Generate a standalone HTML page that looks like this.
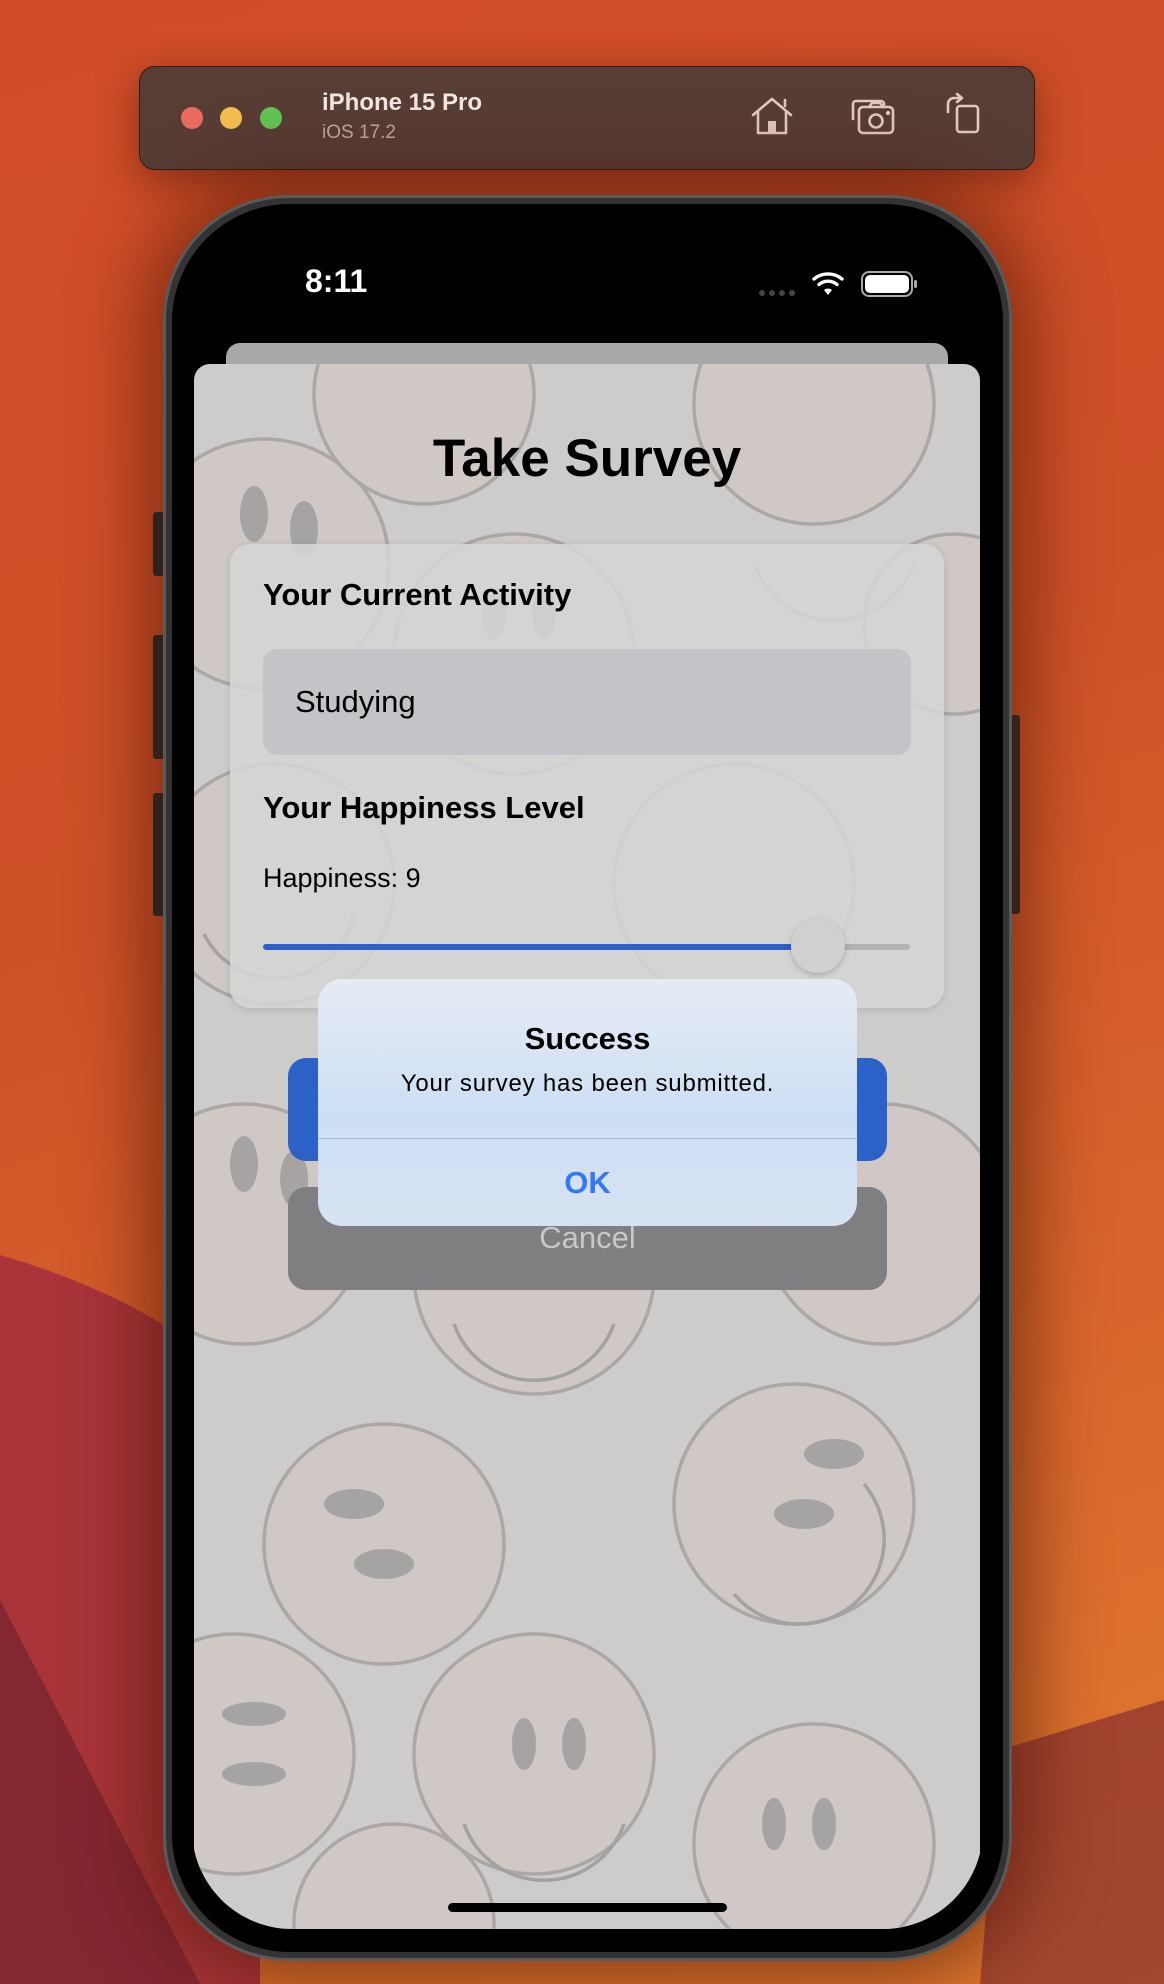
<!DOCTYPE html>
<html><head><meta charset="utf-8"><style>
*{margin:0;padding:0;box-sizing:border-box}
body{width:1164px;height:1984px;overflow:hidden;position:relative;font-family:"Liberation Sans",sans-serif;
background:linear-gradient(160deg,#d14d28 0%,#cf5128 40%,#d8652c 70%,#e07a30 100%)}
.abs{position:absolute}
</style></head><body>
<svg class="abs" style="left:0;top:0" width="1164" height="1984">
<path d="M0 1255 C120 1290 200 1340 260 1400 L260 1984 L0 1984Z" fill="#a8343a"/>
<path d="M0 1600 L0 1984 L200 1984 Z" fill="#6a1f2c" opacity="0.6"/>
<path d="M1000 1750 L1164 1700 L1164 1984 L980 1984Z" fill="#7a2530" opacity="0.6"/>
</svg>

<!-- toolbar -->
<div class="abs" style="left:139px;top:66px;width:896px;height:104px;border-radius:16px;background:#583d35;border:1px solid #2e1e18;box-shadow:0 10px 40px rgba(60,15,5,0.5)"></div>
<div class="abs" style="left:181px;top:107px;width:22px;height:22px;border-radius:50%;background:#ec6a5e"></div>
<div class="abs" style="left:220px;top:107px;width:22px;height:22px;border-radius:50%;background:#f4bf4f"></div>
<div class="abs" style="left:260px;top:107px;width:22px;height:22px;border-radius:50%;background:#61c554"></div>
<div class="abs" style="left:322px;top:89px;color:#f2e6e2;font-weight:bold;font-size:24px">iPhone 15 Pro</div>
<div class="abs" style="left:322px;top:122px;color:#bfaaa4;font-size:19px">iOS 17.2</div>
<svg class="abs" style="left:745px;top:92px" width="250" height="48" fill="none" stroke="#e3c9c2" stroke-width="2.6" stroke-linejoin="round" stroke-linecap="round">
<path d="M8 23 L27 7 L46 23 M13 19 V41 H41 V19 M40 14 V8"/>
<rect x="23" y="29" width="8" height="12" fill="#e3c9c2" stroke="none"/>
<path d="M108 27 V12 a3 3 0 0 1 3-3 H136 a3 3 0 0 1 3 3 V14"/>
<rect x="114" y="15" width="34" height="26" rx="4"/>
<path d="M124 15 l3-4 h8 l3 4"/>
<circle cx="131" cy="29" r="6.5"/><circle cx="143" cy="21" r="0.8" fill="#e3c9c2"/>
<rect x="212" y="14" width="21" height="26" rx="3"/>
<path d="M203 20 V12 a6 6 0 0 1 6-6 H216 M212 2 l5 4 l-5 4"/>
</svg>

<!-- phone -->
<div class="abs" style="left:153px;top:512px;width:12px;height:64px;background:#2a2a2a;border-radius:3px"></div>
<div class="abs" style="left:153px;top:635px;width:12px;height:124px;background:#2a2a2a;border-radius:3px"></div>
<div class="abs" style="left:153px;top:793px;width:12px;height:123px;background:#2a2a2a;border-radius:3px"></div>
<div class="abs" style="left:1008px;top:715px;width:12px;height:199px;background:#2a2a2a;border-radius:3px"></div>
<div class="abs" style="left:163px;top:195px;width:849px;height:1766px;border-radius:125px;background:#333;border:3px solid #5a5a5a;box-shadow:0 0 70px 20px rgba(70,20,5,0.55)"></div>
<div class="abs" style="left:172px;top:204px;width:831px;height:1748px;border-radius:118px;background:#000"></div>
<div class="abs" style="left:192px;top:214px;width:791px;height:1715px;border-radius:100px;background:#000;overflow:hidden">
  <div class="abs" style="left:113px;top:49px;color:#fff;font-weight:bold;font-size:32px">8:11</div>
  <svg class="abs" style="left:560px;top:55px" width="170" height="32">
    <g fill="#444"><circle cx="10" cy="24" r="3"/><circle cx="20" cy="24" r="3"/><circle cx="30" cy="24" r="3"/><circle cx="40" cy="24" r="3"/></g>
    <g fill="none" stroke="#fff" stroke-width="3.4" stroke-linecap="round">
      <path d="M62 10 a22 22 0 0 1 28 0"/><path d="M67 15.5 a14 14 0 0 1 18 0"/>
    </g>
    <path d="M72 21 a6 6 0 0 1 8 0 L76 26Z" fill="#fff"/>
    <rect x="110" y="3" width="50" height="24" rx="7" fill="none" stroke="#aaa" stroke-width="2"/>
    <rect x="113" y="6" width="44" height="18" rx="5" fill="#fff"/>
    <rect x="162" y="11" width="3" height="8" rx="1.5" fill="#aaa"/>
  </svg>
  <div class="abs" style="left:34px;top:129px;width:722px;height:60px;border-radius:14px;background:#a8a8a8"></div>
  <div class="abs" style="left:2px;top:150px;width:786px;height:1600px;border-radius:16px 16px 0 0;background:#cdcccb;overflow:hidden">
    <svg class="abs" style="left:0;top:0" width="786" height="1600" fill="none" stroke="#a3a2a1" stroke-width="3.5">
      <g fill="#cfc8c4" stroke="#aaa7a5"><circle cx="70" cy="200" r="125"/><circle cx="320" cy="290" r="120"/><circle cx="620" cy="40" r="120"/><circle cx="540" cy="520" r="120"/><circle cx="80" cy="520" r="120"/><circle cx="50" cy="860" r="120"/><circle cx="340" cy="910" r="120"/><circle cx="690" cy="860" r="120"/><circle cx="190" cy="1180" r="120"/><circle cx="600" cy="1140" r="120"/><circle cx="40" cy="1390" r="120"/><circle cx="340" cy="1390" r="120"/><circle cx="620" cy="1480" r="120"/><circle cx="200" cy="1560" r="100"/><circle cx="760" cy="260" r="90"/><circle cx="230" cy="30" r="110"/></g>
      <g fill="#a6a4a3" stroke="none"><ellipse cx="60" cy="150" rx="14" ry="28"/><ellipse cx="110" cy="165" rx="14" ry="28"/><ellipse cx="300" cy="250" rx="12" ry="26"/><ellipse cx="350" cy="250" rx="12" ry="26"/><ellipse cx="330" cy="880" rx="12" ry="26"/><ellipse cx="380" cy="880" rx="12" ry="26"/><ellipse cx="50" cy="800" rx="14" ry="28"/><ellipse cx="100" cy="815" rx="14" ry="28"/><ellipse cx="160" cy="1140" rx="30" ry="15"/><ellipse cx="190" cy="1200" rx="30" ry="15"/><ellipse cx="640" cy="1090" rx="30" ry="15"/><ellipse cx="610" cy="1150" rx="30" ry="15"/><ellipse cx="60" cy="1350" rx="32" ry="12"/><ellipse cx="60" cy="1410" rx="32" ry="12"/><ellipse cx="580" cy="1460" rx="12" ry="26"/><ellipse cx="630" cy="1460" rx="12" ry="26"/><ellipse cx="330" cy="1380" rx="12" ry="26"/><ellipse cx="380" cy="1380" rx="12" ry="26"/></g>
      <path d="M260 960 a85 85 0 0 0 160 0"/><path d="M270 1460 a85 85 0 0 0 160 0"/><path d="M10 570 a80 80 0 0 0 150 -20"/><path d="M540 1230 a85 85 0 0 0 130 -110"/><path d="M560 200 a85 85 0 0 0 160 0"/>
    </svg>
    <div class="abs" style="left:0;width:786px;top:64px;text-align:center;font-weight:bold;font-size:53px;color:#000">Take Survey</div>
    <div class="abs" style="left:36px;top:180px;width:714px;height:464px;border-radius:20px;background:rgba(213,213,213,0.88);box-shadow:0 2px 8px rgba(0,0,0,0.12)"></div>
    <div class="abs" style="left:69px;top:213px;font-weight:bold;font-size:31px">Your Current Activity</div>
    <div class="abs" style="left:69px;top:285px;width:648px;height:106px;border-radius:14px;background:#c4c4c8"></div>
    <div class="abs" style="left:101px;top:320px;font-size:31px">Studying</div>
    <div class="abs" style="left:69px;top:426px;font-weight:bold;font-size:31px">Your Happiness Level</div>
    <div class="abs" style="left:69px;top:499px;font-size:27px">Happiness: 9</div>
    <div class="abs" style="left:69px;top:580px;width:647px;height:6px;border-radius:3px;background:#b2b2b2"></div>
    <div class="abs" style="left:69px;top:580px;width:556px;height:6px;border-radius:3px;background:#2c62c8"></div>
    <div class="abs" style="left:597px;top:555px;width:54px;height:54px;border-radius:50%;background:#d0d0d0;box-shadow:0 2px 6px rgba(0,0,0,0.2)"></div>
    <div class="abs" style="left:94px;top:694px;width:599px;height:103px;border-radius:18px;background:#2c62c8"></div>
    <div class="abs" style="left:94px;top:823px;width:599px;height:103px;border-radius:18px;background:#7f7f82"></div>
    <div class="abs" style="left:94px;top:856px;width:599px;text-align:center;color:#c8c8ca;font-size:31px">Cancel</div>
  </div>
  <div class="abs" style="left:126px;top:765px;width:539px;height:247px;border-radius:24px;background:linear-gradient(180deg,#e6ebf3 0%,#cddff5 55%,#d6e2f2 100%);overflow:hidden">
    <div class="abs" style="left:0;width:539px;top:42px;text-align:center;font-weight:bold;font-size:31px;color:#000">Success</div>
    <div class="abs" style="left:0;width:539px;top:91px;text-align:center;font-size:24px;color:#000;letter-spacing:0.8px">Your survey has been submitted.</div>
    <div class="abs" style="left:0;top:159px;width:539px;height:1px;background:#a9b7c8"></div>
    <div class="abs" style="left:0;width:539px;top:186px;text-align:center;font-weight:bold;font-size:31px;color:#3478f6">OK</div>
  </div>
  <div class="abs" style="left:256px;top:1689px;width:279px;height:9px;border-radius:5px;background:#000"></div>
</div>
</body></html>
